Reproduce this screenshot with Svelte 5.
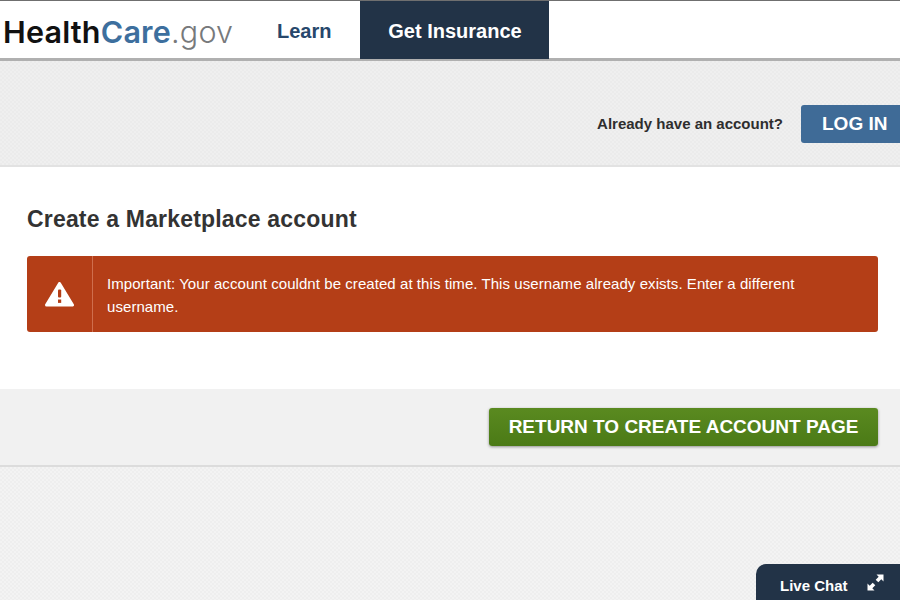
<script>
	const message =
		'Important: Your account couldnt be created at this time. This username already exists. Enter a different username.';
</script>

<div class="page">
	<header class="site-header">
		<a class="logo" href="#home"><span class="health">Health</span><span class="care">Care</span><span class="gov">.gov</span></a>
		<nav class="main-nav">
			<a class="nav-link" href="#learn">Learn</a>
			<a class="nav-link active" href="#insurance">Get Insurance</a>
		</nav>
	</header>

	<section class="band login-band">
		<span class="login-prompt">Already have an account?</span>
		<button class="login-btn">LOG IN</button>
	</section>

	<main class="content">
		<h1>Create a Marketplace account</h1>
		<div class="alert">
			<div class="alert-icon">
				<svg width="29" height="25" viewBox="0 0 29 25">
					<path d="M14.5 1.5 L27.5 23 H1.5 Z" fill="#fff" stroke="#fff" stroke-width="3" stroke-linejoin="round" />
					<rect x="13" y="7.5" width="3.2" height="8" rx="1" fill="#b43e17" />
					<rect x="13" y="17.5" width="3.2" height="3.4" fill="#b43e17" />
				</svg>
			</div>
			<p class="alert-text">{message}</p>
		</div>
	</main>

	<section class="band action-band">
		<button class="return-btn">RETURN TO CREATE ACCOUNT PAGE</button>
	</section>

	<div class="live-chat">
		<span>Live Chat</span>
		<svg width="17" height="17" viewBox="0 0 17 17">
			<path d="M9.5 0.5 H16.5 V7.5 L14.3 5.3 L11.3 8.3 L8.7 5.7 L11.7 2.7 Z" fill="#fff" />
			<path d="M0.5 9.5 V16.5 H7.5 L5.3 14.3 L8.3 11.3 L5.7 8.7 L2.7 11.7 Z" fill="#fff" />
		</svg>
	</div>
</div>

<style>
	:global(body) {
		margin: 0;
		font-family: 'Liberation Sans', Arial, sans-serif;
	}

	.page {
		position: relative;
		height: 600px;
		overflow: hidden;
		box-sizing: border-box;
		border-top: 1px solid #6f6f6f;
		background: repeating-conic-gradient(#eeeeee 0 25%, #f3f3f3 0 50%) 0 0 / 4px 4px;
	}

	.site-header {
		display: flex;
		align-items: stretch;
		height: 57px;
		background: #fff;
		border-bottom: 3px solid #b0b0b0;
	}

	.logo {
		width: 277px;
		padding-left: 3px;
		box-sizing: border-box;
		font-family: Inter, 'Liberation Sans', sans-serif;
		font-size: 30.5px;
		line-height: 61px;
		text-decoration: none;
		letter-spacing: 0.2px;
		white-space: nowrap;
	}

	.health {
		color: #111;
		font-weight: 600;
	}

	.care {
		color: #3d6f9e;
		font-weight: 600;
	}

	.gov {
		color: #77797b;
		font-weight: 300;
	}

	.main-nav {
		display: flex;
	}

	.nav-link {
		display: flex;
		align-items: center;
		padding-top: 3px;
		padding-right: 29px;
		box-sizing: border-box;
		font-size: 20px;
		font-weight: bold;
		color: #27476b;
		text-decoration: none;
	}

	.nav-link.active {
		justify-content: center;
		width: 189px;
		height: 58px;
		padding: 3px 0 0;
		background: #223347;
		color: #fff;
	}

	.band {
		display: flex;
		align-items: center;
		justify-content: flex-end;
		box-sizing: border-box;
	}

	.login-band {
		height: 106px;
		padding-top: 21px;
		border-bottom: 2px solid #e2e2e2;
		background: repeating-conic-gradient(#ebebeb 0 25%, #efefef 0 50%) 0 0 / 4px 4px;
	}

	.login-prompt {
		margin-right: 18px;
		font-size: 15px;
		font-weight: bold;
		color: #2e2e2e;
	}

	.login-btn {
		width: 99px;
		height: 38px;
		padding: 0 0 0 21px;
		border: 0;
		border-radius: 3px 0 0 3px;
		background: #3f6b97;
		color: #fff;
		font: bold 19px 'Liberation Sans', Arial, sans-serif;
		text-align: left;
	}

	.content {
		height: 222px;
		box-sizing: border-box;
		padding: 37px 22px 0 27px;
		background: #fff;
	}

	h1 {
		margin: 0;
		font-size: 23px;
		line-height: 30px;
		font-weight: bold;
		letter-spacing: 0.18px;
		color: #333;
	}

	.alert {
		display: flex;
		margin-top: 22px;
		height: 76px;
		border-radius: 3px;
		background: #b43e17;
		color: #fff;
	}

	.alert-icon {
		display: flex;
		align-items: center;
		justify-content: center;
		flex: none;
		width: 65px;
		border-right: 1px solid #cf6e4d;
	}

	.alert-text {
		margin: 0;
		padding: 16px 70px 0 14px;
		font-size: 15px;
		line-height: 23px;
		letter-spacing: 0.065px;
	}

	.action-band {
		height: 78px;
		padding-right: 22px;
		background: #f1f1f1;
		border-bottom: 2px solid #dcdcdc;
	}

	.return-btn {
		width: 389px;
		height: 38px;
		padding: 0;
		border: 0;
		border-radius: 3px;
		background: linear-gradient(#5a8a20, #4b7a16);
		box-shadow: 0 1px 3px rgba(0, 0, 0, 0.4);
		color: #fff;
		font: bold 19px 'Liberation Sans', Arial, sans-serif;
	}

	.live-chat {
		position: absolute;
		right: 0;
		bottom: 0;
		display: flex;
		align-items: center;
		gap: 19px;
		box-sizing: border-box;
		width: 144px;
		height: 36px;
		padding: 6px 0 0 24px;
		border-radius: 10px 0 0 0;
		background: #223347;
		color: #fff;
		font-size: 15px;
		font-weight: bold;
	}

	.live-chat svg {
		margin-top: -5px;
	}
</style>
